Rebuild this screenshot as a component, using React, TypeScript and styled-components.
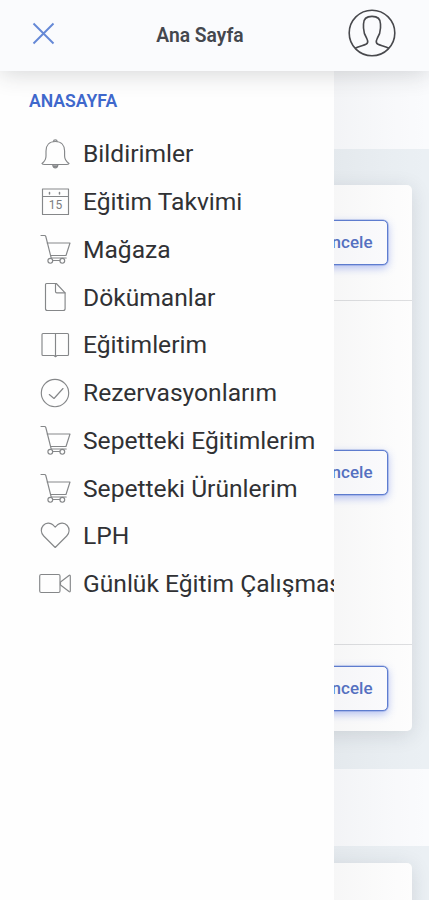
import React from 'react';
import styled, { createGlobalStyle } from 'styled-components';

const GlobalStyle = createGlobalStyle`
  * { box-sizing: border-box; }
  body { margin: 0; font-family: Roboto, "Liberation Sans", sans-serif; background: #ebf0f4; }
`;

const Screen = styled.div`
  display: flex;
  flex-direction: column;
  width: 429px;
  height: 900px;
  overflow: hidden;
`;

const Header = styled.header`
  position: relative;
  z-index: 3;
  display: grid;
  grid-template-columns: 92px 1fr 92px;
  flex: none;
  height: 71px;
  background: #fafbfd;
  box-shadow: 0 2px 24px rgba(40, 44, 52, 0.2);
`;

const IconButton = styled.button<{ $side: 'left' | 'right' }>`
  display: flex;
  align-items: flex-start;
  justify-content: ${(p) => (p.$side === 'left' ? 'flex-start' : 'flex-end')};
  padding: ${(p) => (p.$side === 'left' ? '22px 0 0 32px' : '9px 33px 0 0')};
  border: 0;
  background: none;
`;

const Title = styled.h1`
  margin: 0;
  padding: 1px 29px 0 0;
  font-size: 19.3px;
  font-weight: 600;
  line-height: 70px;
  text-align: center;
  color: #44474d;
`;

const Body = styled.div`
  position: relative;
  flex: 1;
`;

const Drawer = styled.nav`
  position: absolute;
  z-index: 2;
  inset: 0 auto 0 0;
  width: 334px;
  padding: 20px 0 0;
  overflow: hidden;
  background: #fefefe;
`;

const DrawerShade = styled.div`
  position: absolute;
  z-index: 1;
  inset: 0 0 0 334px;
  background: linear-gradient(90deg, rgba(40, 44, 52, 0.035), rgba(40, 44, 52, 0.01) 60%, transparent);
`;

const SectionTitle = styled.h2`
  margin: 0 0 19px 29px;
  font-size: 17.6px;
  font-weight: 600;
  line-height: 20px;
  color: #3f68cc;
`;

const Menu = styled.ul`
  margin: 0;
  padding: 0;
  list-style: none;
`;

const MenuItem = styled.li`
  display: flex;
  align-items: center;
  height: 47.75px;
  padding-left: 38px;
  gap: 11px;
  font-size: 24.6px;
  line-height: 32px;
  white-space: nowrap;
  color: #303134;
`;

const Label = styled.span`
  padding-top: 0.8px;
`;

const Glyph = styled.svg`
  flex: none;
  width: 34px;
  height: 34px;
  fill: none;
  stroke: #858789;
  stroke-width: 1.15;
  stroke-linejoin: round;
  stroke-linecap: round;
`;

const Day = styled.text`
  font: 12px Roboto, sans-serif;
  fill: #7b7d7f;
  stroke: none;
`;

const Band = styled.div<{ $height: number }>`
  height: ${(p) => p.$height}px;
  background: #fafbfd;
`;

const CardArea = styled.section<{ $top: number; $bottom: number }>`
  padding: ${(p) => p.$top}px 17.5px ${(p) => p.$bottom}px;
  background: #ebf0f4;
`;

const Card = styled.div`
  border-radius: 5px;
  background: #fefefe;
  box-shadow: 0 4px 20px rgba(40, 50, 60, 0.13);
`;

const CardRow = styled.div<{ $height: number }>`
  display: flex;
  align-items: center;
  justify-content: flex-end;
  height: ${(p) => p.$height}px;
  padding-right: 23.5px;

  & + & { border-top: 1px solid #dedfe1; }
`;

const ReviewButton = styled.button`
  width: 92px;
  height: 45px;
  padding: 0 14.5px 1px 0;
  border: 1.5px solid #5f7ed2;
  border-radius: 5px;
  background: #fdfdff;
  box-shadow: 0 3px 9px rgba(72, 104, 230, 0.4), 0 0 0 0.6px rgba(76, 111, 208, 0.5);
  font: 500 17px Roboto, sans-serif;
  text-align: right;
  color: #5672c4;
`;

const Cart = () => (
  <>
    <path d="M3 3.5h3.5q1 0 1.3 1L13.2 26h15" />
    <path d="M9.2 11H32l-4 12.5H12.6" />
    <circle cx="12.3" cy="28.8" r="2.4" />
    <circle cx="24.3" cy="28.8" r="2.4" />
    <path d="M14.7 28.5h7.2" />
  </>
);

const icons: Record<string, React.ReactNode> = {
  bell: (
    <>
      <path d="M4 26.5c2.7-2 4-4 4-7.5V14c0-5.500 3.300-9.500 9.300-9.500s9.300 4 9.300 9.500v5c0 3.500 1.500 5.500 4.400 7.500-.5 1-1.500 1-2.500 1H6.500c-1 0-2 0-2.500-1z" />
      <path d="M15.5 4.3c0-2 3.6-2 3.6 0M14.7 28c.5 3.800 4.700 3.800 5.200 0z" />
      <path d="M16 29.5h2.6" strokeWidth="2" />
    </>
  ),
  calendar: (
    <>
      <path d="M4.5 4h26v25.5h-26zM4.5 11.500h26" />
      <path d="M11.5 7.500v1.500M21.500 7.500v1.500" strokeWidth="1.5" />
      <Day x="10.7" y="23.5">15</Day>
    </>
  ),
  cart: <Cart />,
  document: (
    <>
      <path d="M8.500 3.500h9.800l8.800 9.300v15.700q0 2-1.800 2H9.300q-1.800 0-1.800-2v-24q0-1 1-1z" />
      <path d="M17.500 4v7.500q0 1.300 1.300 1.300H27" />
    </>
  ),
  book: (
    <>
      <path d="M5 5.500h24.500q1 0 1 1v20q0 1-1 1H19l-1.500 1.200-1.500-1.200H5q-1 0-1-1v-20q0-1 1-1z" />
      <path d="M17.500 5.500v23" />
    </>
  ),
  check: (
    <>
      <circle cx="17" cy="17" r="13.7" />
      <path d="M11.300 18.500l4.700 4 9-10" />
    </>
  ),
  heart: (
    <path d="M17.200 28.500 5.700 17c-3-3-3.200-7.500-.5-10.500s7-3 9.700-.7l2.300 2.400 2.300-2.400c2.700-2.300 7-2.300 9.700.7s2.500 7.500-.5 10.500z" />
  ),
  video: (
    <>
      <rect x="1.7" y="7.5" width="20.3" height="18" rx="1.5" />
      <path d="M22.500 15l8.500-6.500q1.300-.8 1.300.5v15q0 1.300-1.300.5L22.500 18z" />
    </>
  ),
};

const menu = [
  { icon: 'bell', label: 'Bildirimler' },
  { icon: 'calendar', label: 'Eğitim Takvimi' },
  { icon: 'cart', label: 'Mağaza' },
  { icon: 'document', label: 'Dökümanlar' },
  { icon: 'book', label: 'Eğitimlerim' },
  { icon: 'check', label: 'Rezervasyonlarım' },
  { icon: 'cart', label: 'Sepetteki Eğitimlerim' },
  { icon: 'cart', label: 'Sepetteki Ürünlerim' },
  { icon: 'heart', label: 'LPH' },
  { icon: 'video', label: 'Günlük Eğitim Çalışması' },
];

export default function App() {
  return (
    <Screen>
      <GlobalStyle />
      <Header>
        <IconButton $side="left" aria-label="Kapat">
          <svg width="23" height="23" viewBox="0 0 23 23" stroke="#6488d6" strokeWidth="1.9">
            <path d="M1.500 1.500l20 20M21.500 1.500l-20 20" />
          </svg>
        </IconButton>
        <Title>Ana Sayfa</Title>
        <IconButton $side="right" aria-label="Profil">
          <svg width="48" height="48" viewBox="0 0 48 48" fill="none" stroke="#48494d" strokeWidth="1.6" strokeLinejoin="round">
            <circle cx="24" cy="24" r="22.8" />
            <path d="M7.200 39.300c4-2.300 8-2.600 10.800-4 1.900-1 1.900-3.600.8-5.800-2-3-3.200-6-3.300-10.500V15c0-5 3.300-7.600 8.500-7.600s8.500 2.600 8.500 7.600v4c-.1 4.500-1.300 7.500-3.300 10.500-1.100 2.200-1.100 4.800.8 5.800 2.800 1.400 6.800 1.700 10.800 4" />
          </svg>
        </IconButton>
      </Header>
      <Body>
        <Drawer>
          <SectionTitle>ANASAYFA</SectionTitle>
          <Menu>
            {menu.map((item) => (
              <MenuItem key={item.label}>
                <Glyph viewBox="0 0 34 34">{icons[item.icon]}</Glyph>
                <Label>{item.label}</Label>
              </MenuItem>
            ))}
          </Menu>
        </Drawer>
        <DrawerShade />
        <Band $height={78} />
        <CardArea $top={36} $bottom={38}>
          <Card>
            <CardRow $height={115}><ReviewButton>İncele</ReviewButton></CardRow>
            <CardRow $height={344}><ReviewButton>İncele</ReviewButton></CardRow>
            <CardRow $height={87}><ReviewButton>İncele</ReviewButton></CardRow>
          </Card>
        </CardArea>
        <Band $height={77} />
        <CardArea $top={17} $bottom={0}>
          <Card>
            <CardRow $height={60} />
          </Card>
        </CardArea>
      </Body>
    </Screen>
  );
}
